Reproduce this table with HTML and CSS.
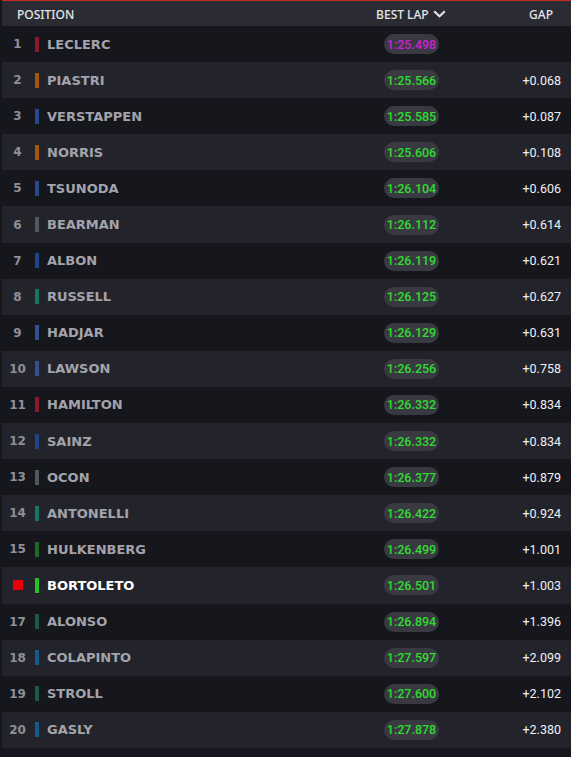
FILE: index.html
```html
<!DOCTYPE html>
<html>
<head>
<meta charset="utf-8">
<link rel="stylesheet" href="styles.css">
</head>
<body>
<div class="board">
  <div class="head">
    <div class="h-pos">POSITION</div>
    <div class="h-lap">BEST LAP
      <svg class="chev" width="13" height="8" viewBox="0 0 13 8"><polyline points="1.2,1.2 6.5,6.3 11.8,1.2" fill="none" stroke="#e6e6ea" stroke-width="2"/></svg>
    </div>
    <div class="h-gap">GAP</div>
  </div>
  <div class="row"><div class="pos">1</div><div class="bar" style="background:#8a1a28"></div><div class="name">LECLERC</div><div class="lap"><span class="pill fast">1:25.498</span></div><div class="gap"></div></div>
  <div class="row"><div class="pos">2</div><div class="bar" style="background:#a4560f"></div><div class="name">PIASTRI</div><div class="lap"><span class="pill">1:25.566</span></div><div class="gap">+0.068</div></div>
  <div class="row"><div class="pos">3</div><div class="bar" style="background:#284a8a"></div><div class="name">VERSTAPPEN</div><div class="lap"><span class="pill">1:25.585</span></div><div class="gap">+0.087</div></div>
  <div class="row"><div class="pos">4</div><div class="bar" style="background:#a4560f"></div><div class="name">NORRIS</div><div class="lap"><span class="pill">1:25.606</span></div><div class="gap">+0.108</div></div>
  <div class="row"><div class="pos">5</div><div class="bar" style="background:#284a8a"></div><div class="name">TSUNODA</div><div class="lap"><span class="pill">1:26.104</span></div><div class="gap">+0.606</div></div>
  <div class="row"><div class="pos">6</div><div class="bar" style="background:#55575e"></div><div class="name">BEARMAN</div><div class="lap"><span class="pill">1:26.112</span></div><div class="gap">+0.614</div></div>
  <div class="row"><div class="pos">7</div><div class="bar" style="background:#1c4684"></div><div class="name">ALBON</div><div class="lap"><span class="pill">1:26.119</span></div><div class="gap">+0.621</div></div>
  <div class="row"><div class="pos">8</div><div class="bar" style="background:#167566"></div><div class="name">RUSSELL</div><div class="lap"><span class="pill">1:26.125</span></div><div class="gap">+0.627</div></div>
  <div class="row"><div class="pos">9</div><div class="bar" style="background:#33518e"></div><div class="name">HADJAR</div><div class="lap"><span class="pill">1:26.129</span></div><div class="gap">+0.631</div></div>
  <div class="row"><div class="pos">10</div><div class="bar" style="background:#33518e"></div><div class="name">LAWSON</div><div class="lap"><span class="pill">1:26.256</span></div><div class="gap">+0.758</div></div>
  <div class="row"><div class="pos">11</div><div class="bar" style="background:#8a1a28"></div><div class="name">HAMILTON</div><div class="lap"><span class="pill">1:26.332</span></div><div class="gap">+0.834</div></div>
  <div class="row"><div class="pos">12</div><div class="bar" style="background:#1c4684"></div><div class="name">SAINZ</div><div class="lap"><span class="pill">1:26.332</span></div><div class="gap">+0.834</div></div>
  <div class="row"><div class="pos">13</div><div class="bar" style="background:#55575e"></div><div class="name">OCON</div><div class="lap"><span class="pill">1:26.377</span></div><div class="gap">+0.879</div></div>
  <div class="row"><div class="pos">14</div><div class="bar" style="background:#167566"></div><div class="name">ANTONELLI</div><div class="lap"><span class="pill">1:26.422</span></div><div class="gap">+0.924</div></div>
  <div class="row"><div class="pos">15</div><div class="bar" style="background:#1c6a24"></div><div class="name">HULKENBERG</div><div class="lap"><span class="pill">1:26.499</span></div><div class="gap">+1.001</div></div>
  <div class="row me"><div class="pos"><span class="mark"></span></div><div class="bar" style="background:#22c422"></div><div class="name">BORTOLETO</div><div class="lap"><span class="pill">1:26.501</span></div><div class="gap">+1.003</div></div>
  <div class="row"><div class="pos">17</div><div class="bar" style="background:#1a5a44"></div><div class="name">ALONSO</div><div class="lap"><span class="pill">1:26.894</span></div><div class="gap">+1.396</div></div>
  <div class="row"><div class="pos">18</div><div class="bar" style="background:#125d8c"></div><div class="name">COLAPINTO</div><div class="lap"><span class="pill">1:27.597</span></div><div class="gap">+2.099</div></div>
  <div class="row"><div class="pos">19</div><div class="bar" style="background:#1a5a44"></div><div class="name">STROLL</div><div class="lap"><span class="pill">1:27.600</span></div><div class="gap">+2.102</div></div>
  <div class="row"><div class="pos">20</div><div class="bar" style="background:#125d8c"></div><div class="name">GASLY</div><div class="lap"><span class="pill">1:27.878</span></div><div class="gap">+2.380</div></div>
</div>
</body>
</html>
```

FILE: styles.css
```css
html, body {
  margin: 0;
  padding: 0;
  background: #16161d;
}
body {
  padding-left: 2px;
  width: 569px;
  height: 757px;
  overflow: hidden;
}
.board {
  display: flex;
  flex-direction: column;
}
.head {
  display: flex;
  align-items: center;
  height: 25px;
  padding-top: 1px;
  background: #2b2c33;
  border-top: 1px solid #c52a1f;
  box-sizing: border-box;
  height: 26px;
  font-family: "Noto Sans", sans-serif;
  font-size: 12px;
  font-weight: 500;
  color: #e6e6ea;
}
.h-pos {
  flex: 1;
  padding-left: 15px;
}
.h-lap {
  display: flex;
  align-items: center;
  gap: 4px;
  width: 153px;
}
.chev {
  display: block;
}
.h-gap {
  padding-right: 18px;
}
.row {
  display: flex;
  align-items: center;
  height: 36.1px;
  flex: none;
}
.row:nth-child(odd) {
  background: #23242b;
}
.pos {
  width: 31px;
  text-align: center;
  font-family: "DejaVu Sans", sans-serif;
  font-weight: bold;
  font-size: 12px;
  color: #8f8f97;
  display: flex;
  justify-content: center;
  align-items: center;
}
.mark {
  display: block;
  width: 10px;
  height: 10px;
  background: #e8000d;
}
.bar {
  width: 4px;
  height: 15px;
  margin-left: 2px;
}
.name {
  width: 337px;
  margin-left: 8px;
  font-family: "DejaVu Sans", sans-serif;
  font-weight: bold;
  font-size: 13px;
  color: #a3a3ab;
}
.me .name {
  color: #ffffff;
}
.lap {
  width: 55px;
  display: flex;
}
.pill {
  display: flex;
  align-items: center;
  justify-content: center;
  width: 55px;
  height: 20px;
  border-radius: 10px;
  background: #393a41;
  font-family: "Roboto", sans-serif;
  font-weight: 500;
  font-size: 12.5px;
  color: #30dc30;
}
.pill.fast {
  color: #c822d6;
}
.gap {
  flex: 1;
  text-align: right;
  padding-right: 10px;
  font-family: "Roboto", sans-serif;
  font-size: 12.5px;
  color: #f0f0f4;
}
```
